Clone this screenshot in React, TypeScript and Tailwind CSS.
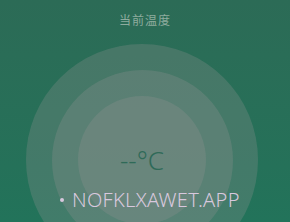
export default function App() {
  return (
    <div
      className="relative flex h-[222px] w-[290px] flex-col items-center overflow-hidden bg-gradient-to-b from-[#2c6b56] to-[#22735a]"
      style={{ fontFamily: '"Noto Sans", "Noto Sans CJK SC", sans-serif' }}
    >
      <div className="mt-[13px] text-[12px] leading-[16px] tracking-[1px] text-[#8eab9e]">当前温度</div>
      <div className="ml-[-6px] mt-[15px] flex h-[232px] w-[232px] shrink-0 items-center justify-center rounded-full bg-[#939393]/[0.28]">
        <div className="flex h-[181px] w-[181px] items-center justify-center rounded-full bg-[#939393]/[0.28]">
          <div className="flex h-[128px] w-[128px] items-center justify-center rounded-full bg-[#939393]/[0.28]">
            <span className="text-[26px] font-light leading-none text-[#2f6a58]">--°C</span>
          </div>
        </div>
      </div>
      <div className="absolute left-[60px] top-[187px] flex items-center gap-[8px] text-[20px] font-light leading-[26px] text-[#d8c8de]">
        <span className="h-[4px] w-[4px] rounded-full bg-[#d8c8de]" />
        <span className="tracking-[0.3px]">NOFKLXAWET.APP</span>
      </div>
    </div>
  );
}
